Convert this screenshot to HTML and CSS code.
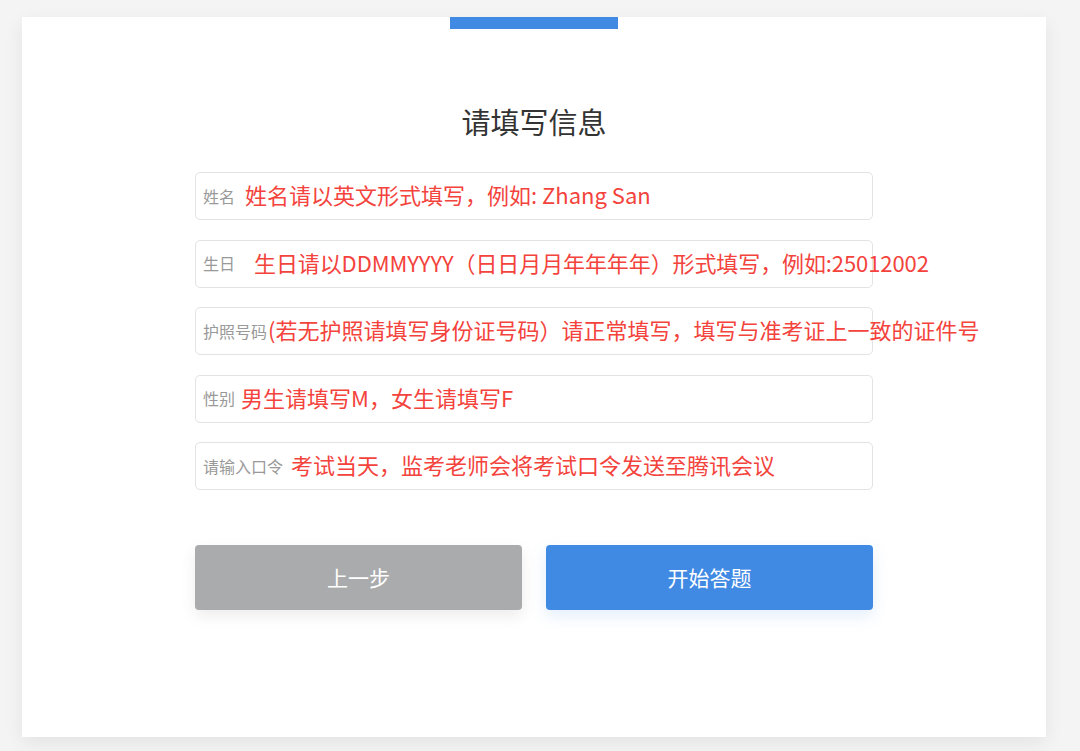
FILE: index.html
```html
<!DOCTYPE html>
<html lang="zh">
<head>
<meta charset="utf-8">
<title>请填写信息</title>
<link rel="stylesheet" href="styles.css">
</head>
<body>
<div class="card">
  <div class="top-bar"></div>
  <h1 class="title">请填写信息</h1>
  <div class="form">
    <div class="field">
      <span class="label">姓名</span>
      <span class="hint hint-name">姓名请以英文形式填写，例如: Zhang San</span>
    </div>
    <div class="field">
      <span class="label">生日</span>
      <span class="hint hint-birth">生日请以DDMMYYYY（日日月月年年年年）形式填写，例如:25012002</span>
    </div>
    <div class="field">
      <span class="label">护照号码</span>
      <span class="hint hint-passport">(若无护照请填写身份证号码）请正常填写，填写与准考证上一致的证件号</span>
    </div>
    <div class="field">
      <span class="label">性别</span>
      <span class="hint hint-gender">男生请填写M，女生请填写F</span>
    </div>
    <div class="field">
      <span class="label">请输入口令</span>
      <span class="hint hint-code">考试当天，监考老师会将考试口令发送至腾讯会议</span>
    </div>
    <div class="actions">
      <button class="btn btn-prev">上一步</button>
      <button class="btn btn-start">开始答题</button>
    </div>
  </div>
</div>
</body>
</html>
```
FILE: styles.css
```css
html, body {
  margin: 0;
  padding: 0;
}
body {
  background: #f4f4f4;
  font-family: "Noto Sans CJK SC", "Noto Sans", sans-serif;
  height: 751px;
  overflow: hidden;
}
.card {
  margin: 17px 0 0 22px;
  width: 1024px;
  height: 720px;
  background: #fff;
  box-shadow: 0 6px 18px rgba(0, 0, 0, 0.07);
  display: flex;
  flex-direction: column;
  align-items: center;
}
.top-bar {
  width: 168px;
  height: 12px;
  background: #418ae4;
}
.title {
  margin: 72px 0 0 0;
  font-size: 29px;
  line-height: 40px;
  font-weight: 400;
  color: #333;
}
.form {
  margin-top: 31px;
  width: 678px;
  display: flex;
  flex-direction: column;
  gap: 19.5px;
}
.field {
  box-sizing: border-box;
  height: 48px;
  border: 1px solid #e3e3e3;
  border-radius: 5px;
  display: flex;
  align-items: center;
  padding-left: 7px;
  white-space: nowrap;
}
.label {
  font-size: 16px;
  color: #999;
  line-height: 20px;
  margin-bottom: 1px;
}
.hint {
  font-size: 22px;
  color: #f3433c;
  line-height: 28px;
  margin-bottom: 4px;
}
.hint-name { margin-left: 10px; }
.hint-birth { margin-left: 19px; letter-spacing: -0.1px; }
.hint-passport { margin-left: 1px; }
.hint-gender { margin-left: 6px; }
.hint-code { margin-left: 8px; }
.actions {
  margin-top: 35.5px;
  display: flex;
  gap: 24px;
}
.btn {
  flex: 1;
  height: 65px;
  border: none;
  border-radius: 4px;
  color: #fff;
  font-family: "Noto Sans CJK SC", "Noto Sans", sans-serif;
  font-size: 21px;
  padding-bottom: 3px;
  cursor: pointer;
}
.btn-prev {
  background: #aaabac;
  box-shadow: 0 6px 16px rgba(0, 0, 0, 0.08);
}
.btn-start {
  background: #418ae4;
  box-shadow: 0 6px 16px rgba(65, 138, 228, 0.15);
}
```
